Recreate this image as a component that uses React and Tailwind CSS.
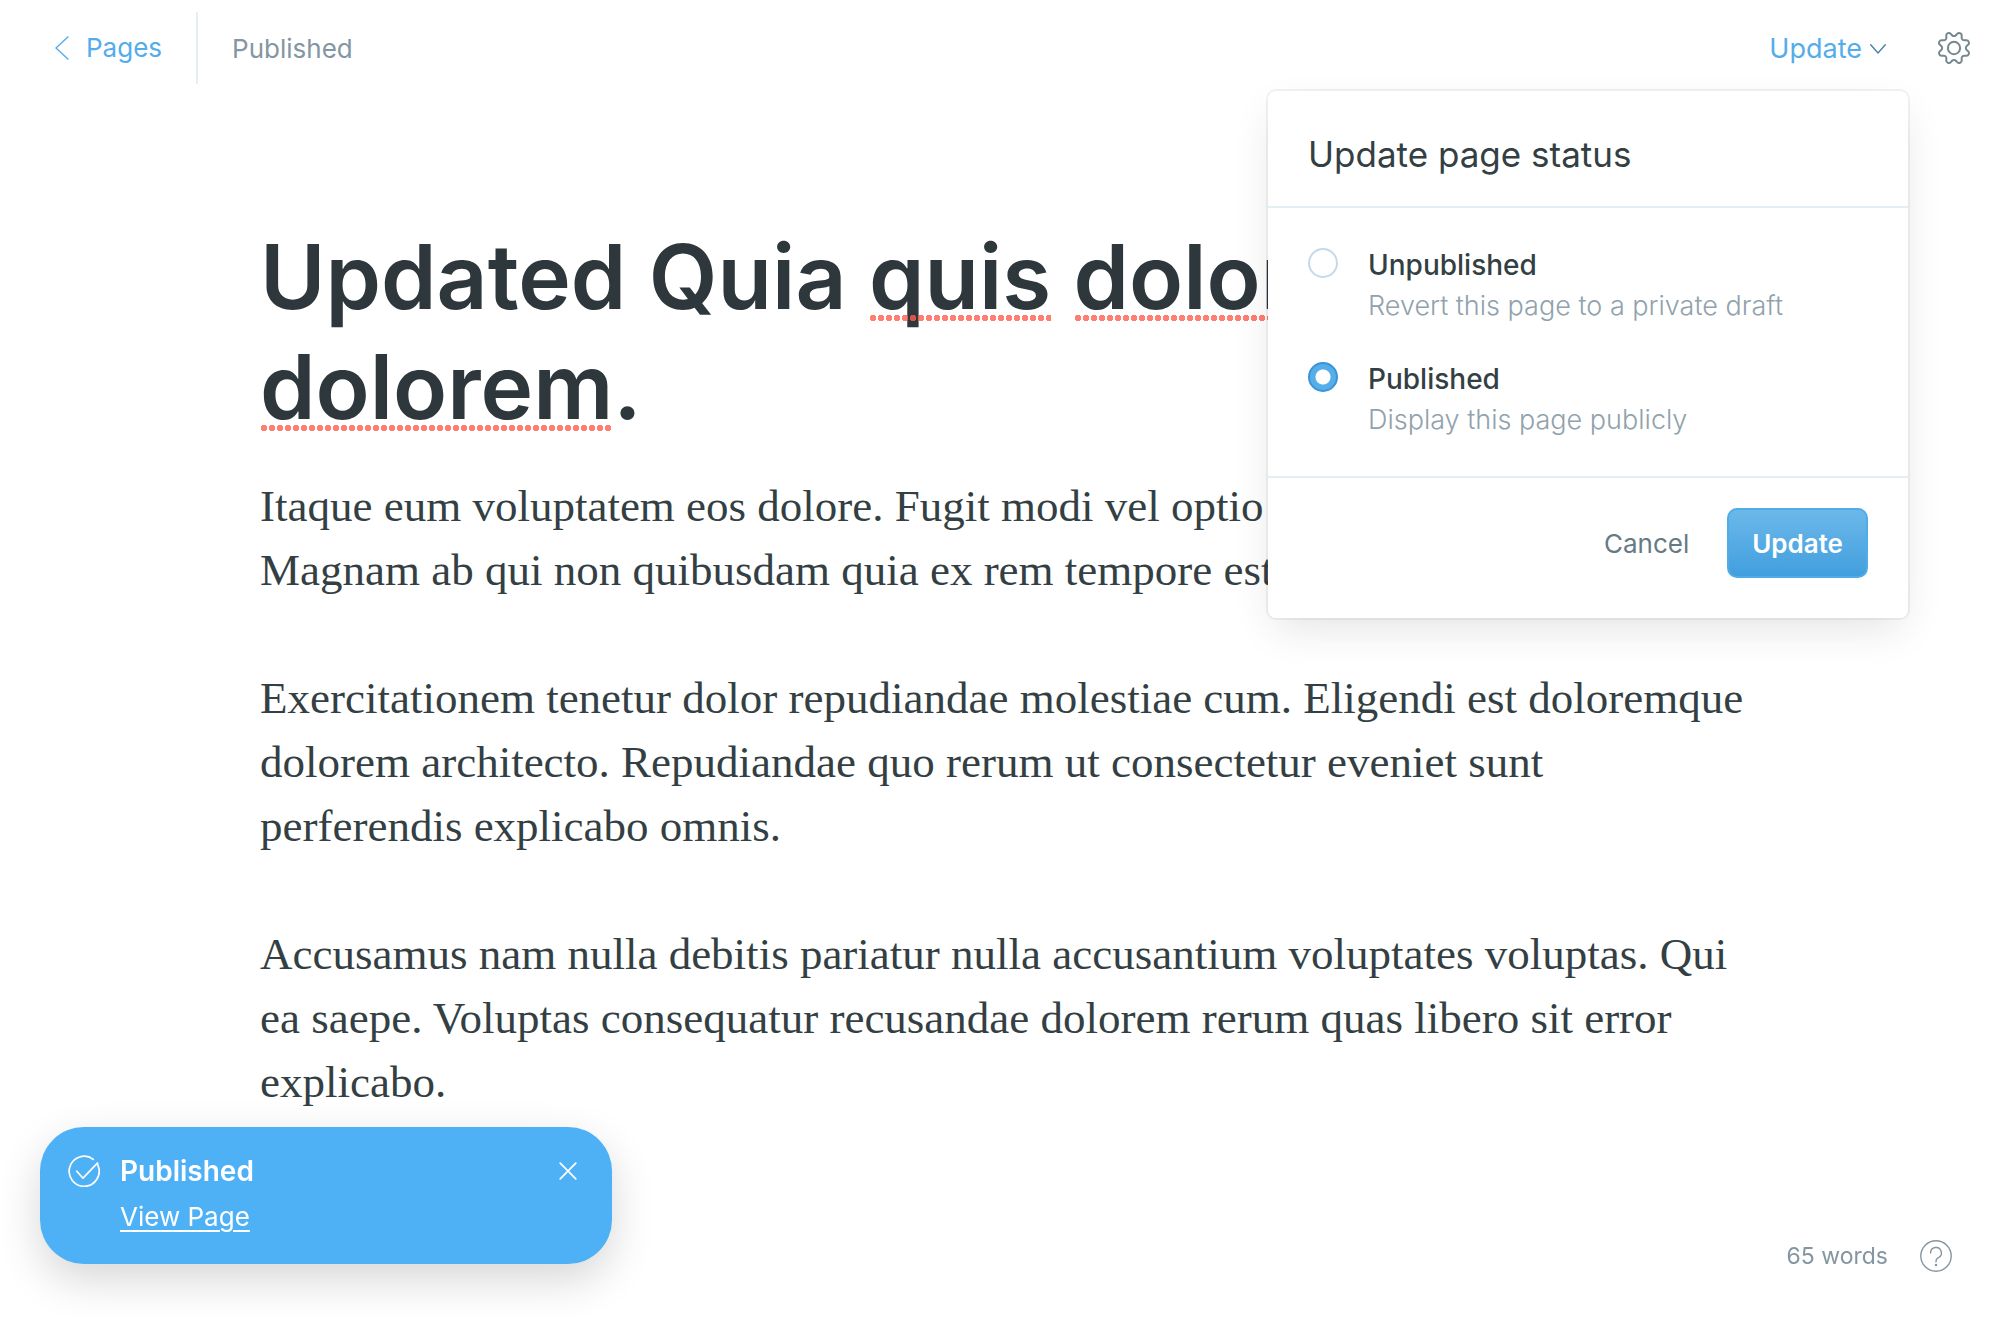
import React, { useState } from "react";

function ChevronLeft() {
  return (
    <svg width="14" height="24" viewBox="0 0 14 24" fill="none" stroke="currentColor" strokeWidth="1.4" aria-hidden="true">
      <path d="M13.4 0.5 1 12l12.4 11.5" />
    </svg>
  );
}

function ChevronDown() {
  return (
    <svg width="16" height="10" viewBox="0 0 16 10" fill="none" stroke="#3f7ea8" strokeWidth="1.3" strokeLinecap="round" aria-hidden="true">
      <path d="M0.7 0.8 8 9 15.3 0.8" />
    </svg>
  );
}

function Gear() {
  return (
    <svg width="32" height="32" viewBox="0 0 24 24" className="overflow-visible" fill="none" stroke="currentColor" strokeWidth="1.5" strokeLinejoin="round" aria-hidden="true">
      <path d="M10.546 2.438a1.957 1.957 0 0 0 2.908 0L14.4 1.4a1.959 1.959 0 0 1 3.41 1.413l-.071 1.4A1.958 1.958 0 0 0 19.79 6.27l1.4-.071A1.959 1.959 0 0 1 22.6 9.606l-1.041.94a1.96 1.96 0 0 0 0 2.909l1.041.94a1.959 1.959 0 0 1-1.413 3.41l-1.4-.071a1.958 1.958 0 0 0-2.056 2.056l.071 1.4A1.959 1.959 0 0 1 14.4 22.6l-.941-1.041a1.959 1.959 0 0 0-2.908 0L9.606 22.6A1.959 1.959 0 0 1 6.192 21.192l.072-1.4a1.958 1.958 0 0 0-2.056-2.056l-1.4.071A1.958 1.958 0 0 1 1.4 14.4l1.041-.94a1.96 1.96 0 0 0 0-2.909L1.4 9.606A1.958 1.958 0 0 1 2.809 6.2l1.4.071A1.958 1.958 0 0 0 6.264 4.211l-.072-1.4A1.959 1.959 0 0 1 9.606 1.4Z" />
      <circle cx="12" cy="12" r="4.6" />
    </svg>
  );
}

function CheckCircle() {
  return (
    <svg width="32" height="32" viewBox="0 0 32 32" fill="none" stroke="currentColor" strokeWidth="1.7" strokeLinecap="round" strokeLinejoin="round" aria-hidden="true">
      <path d="M25.3 4.4A15 15 0 1 0 30 10.500L29.400 8.200" />
      <path d="M8.8 16.2 15 23.2 29.4 8.2" />
    </svg>
  );
}

function Close() {
  return (
    <svg width="18" height="18" viewBox="0 0 18 18" fill="none" stroke="currentColor" strokeWidth="1.7" strokeLinecap="round" aria-hidden="true">
      <path d="M1.2 1.2 16.8 16.8M16.8 1.2 1.2 16.8" />
    </svg>
  );
}

function Help() {
  return (
    <svg width="32" height="32" viewBox="0 0 32 32" fill="none" stroke="currentColor" strokeWidth="1.4" strokeLinecap="round" strokeLinejoin="round" aria-hidden="true">
      <circle cx="16" cy="16" r="15.2" />
      <path d="M10.6 12.9a5.4 5.4 0 1 1 7.8 4.8c-1.500.8-2.400 1.700-2.400 3.300v.8" />
      <circle cx="16" cy="25" r="0.6" fill="currentColor" />
    </svg>
  );
}

function Misspelt({ children }) {
  return (
    <span className="relative inline-block after:absolute after:inset-x-0 after:bottom-[11px] after:h-[6px] after:bg-[radial-gradient(circle,#ff5c4d_3px,transparent_3px)] after:bg-[length:8px_6px] after:bg-repeat-x after:opacity-80 after:content-['']">
      {children}
    </span>
  );
}

const OPTIONS = [
  { id: "unpublished", label: "Unpublished", hint: "Revert this page to a private draft" },
  { id: "published", label: "Published", hint: "Display this page publicly" },
];

function StatusMenu() {
  const [status, setStatus] = useState("published");
  return (
    <form
      onSubmit={(e) => e.preventDefault()}
      className="absolute top-[91px] right-[92px] z-10 w-[640px] rounded-lg bg-white shadow-[0_0_0_2px_rgba(0,0,0,0.05),0_16px_40px_-8px_rgba(39,44,49,0.14)]"
    >
      <h2 className="border-b-2 border-[#e3eff3] px-10 pt-[39px] pb-7 text-[35px] leading-[48px] text-[#343f44]">Update page status</h2>
      <fieldset className="flex flex-col gap-8 border-b-2 border-[#e3eff3] px-10 py-9">
        {OPTIONS.map((o) => (
          <div key={o.id} className="flex items-start gap-[30px]">
            <input
              type="radio"
              name="status"
              id={o.id}
              aria-describedby={o.id + "-hint"}
              checked={status === o.id}
              onChange={() => setStatus(o.id)}
              className="mt-1 h-[30px] w-[30px] shrink-0 appearance-none rounded-full border-2 border-[#c5d9e8] bg-white checked:border-[#3a94d8] checked:bg-[radial-gradient(circle,#fff_0,#fff_7px,#55aee8_8px)]"
            />
            <div>
              <label htmlFor={o.id} className="block text-[28px] leading-[42px] font-medium text-[#343f44]">{o.label}</label>
              <p id={o.id + "-hint"} className="text-[27px] leading-10 font-light text-[#90a2ac]">{o.hint}</p>
            </div>
          </div>
        ))}
      </fieldset>
      <div className="flex items-center justify-end gap-[38px] px-10 pt-[30px] pb-10">
        <button type="button" className="pt-0.5 text-[26px] leading-10 text-[#667a84]">Cancel</button>
        <button type="submit" className="h-[70px] rounded-[10px] border-2 border-[#50ace8] bg-linear-to-b from-[#6bb8ea] to-[#419fde] px-[23px] pt-0.5 text-[26px] leading-10 font-semibold text-white">Update</button>
      </div>
    </form>
  );
}

function Toast() {
  return (
    <aside className="fixed bottom-14 left-10 flex w-[572px] items-start gap-5 rounded-[44px] bg-[#4eb1f6] px-7 pt-6 pb-[27px] text-white shadow-[0_16px_44px_0_rgba(0,0,0,0.16)]">
      <span className="mt-1"><CheckCircle /></span>
      <div className="grow">
        <p className="text-[28px] leading-10 font-semibold">Published</p>
        <a href="#view" className="mt-1.5 block w-fit text-[26px] leading-10 underline decoration-2 underline-offset-4">View Page</a>
      </div>
      <button type="button" aria-label="Close" className="mt-[11px] mr-[7px]"><Close /></button>
    </aside>
  );
}

export default function App() {
  return (
    <div className="relative min-h-screen bg-white font-['Inter',sans-serif]">
      <header className="flex items-center justify-between pt-3 pr-[30px] pl-[55px]">
        <div className="flex items-center">
          <a href="#pages" className="flex h-[72px] items-center gap-[17px] border-r-2 border-[#e3eff3] pr-[34px] text-[26px] leading-10 text-[#54adea]">
            <ChevronLeft />
            Pages
          </a>
          <span className="pt-0.5 pl-[34px] text-[26px] leading-10 text-[#8496a2]">Published</span>
        </div>
        <div className="flex items-center gap-[52px]">
          <button type="button" aria-expanded="true" className="flex items-center gap-2 pt-0.5 text-[27px] leading-10 text-[#54adea]">
            Update
            <ChevronDown />
          </button>
          <button type="button" aria-label="Settings" className="text-[#76888f]"><Gear /></button>
        </div>
      </header>
      <StatusMenu />

      <main className="pt-[138px] pr-[13%] pl-[13%]">
        <h1 className="text-[89px] leading-[110px] font-semibold text-[#2e373c]">
          Updated Quia <Misspelt>quis</Misspelt> <Misspelt>dolor</Misspelt>
          <br />
          <Misspelt>dolorem</Misspelt>.
        </h1>
        <div className="-mr-6 mt-8 flex flex-col gap-16 font-['Liberation_Serif',serif] text-[45px] leading-[64px] text-[#343f44]">
          <p>
            Itaque eum voluptatem eos dolore. Fugit modi vel optio aut.
            <br />
            Magnam ab qui non quibusdam quia ex rem tempore est.
          </p>
          <p>
            Exercitationem tenetur dolor repudiandae molestiae cum. Eligendi est doloremque
            <br />
            dolorem architecto. Repudiandae quo rerum ut consectetur eveniet sunt
            <br />
            perferendis explicabo omnis.
          </p>
          <p>
            Accusamus nam nulla debitis pariatur nulla accusantium voluptates voluptas. Qui
            <br />
            ea saepe. Voluptas consequatur recusandae dolorem rerum quas libero sit error
            <br />
            explicabo.
          </p>
        </div>
      </main>

      <Toast />
      <footer className="fixed right-12 bottom-12 flex items-center gap-8 text-[#8496a2]">
        <span className="text-[23px] leading-8">65 words</span>
        <button type="button" aria-label="Help"><Help /></button>
      </footer>
    </div>
  );
}
